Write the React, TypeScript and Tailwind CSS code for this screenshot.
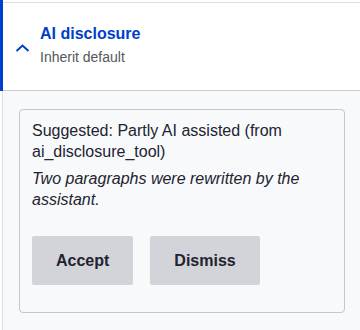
import React from "react";

export default function App() {
  return (
    <div className="relative w-[360px] h-[330px] overflow-hidden bg-white font-['Liberation_Sans',Arial,sans-serif] text-[#222330]">
      {/* blue active marker over the left edge */}
      <div className="absolute left-0 top-0 w-[3px] h-[91px] bg-[#003ecc]" />
      <div className="ml-[2px] mt-[2px] w-[359px] h-[400px] border-l border-t border-[#dedee4] bg-[#f8f9fb]">
        <div className="flex bg-white border-b border-[#cbcbd0] pl-[12px] pt-[22px] pb-[25px]">
          <svg className="mt-[19px] shrink-0" width="15" height="8" viewBox="0 0 15 8" fill="none">
            <path d="M1.5 7 L7.5 1.5 L13.5 7" stroke="#003ecc" strokeWidth="2" />
          </svg>
          <div className="ml-[10px] flex flex-col">
            <span className="text-[16px] font-bold text-[#003ecc] leading-[18.4px]">AI disclosure</span>
            <span className="mt-[6px] text-[14px] text-[#55565b] leading-[16px]">Inherit default</span>
          </div>
        </div>
        <div className="px-4 pt-[18px]">
          <div className="border border-[#c6c6cb] rounded-[4px] px-[12px] pt-[10px] pb-[11px]">
            <p className="text-[16px] leading-[21px]">Suggested: Partly AI assisted (from ai_disclosure_tool)</p>
            <p className="mt-[6px] text-[16px] leading-[21px] italic">Two paragraphs were rewritten by the assistant.</p>
            <div className="mt-[26px] mb-4 flex gap-[17px]">
              <button className="h-[49px] px-6 rounded-[2px] bg-[#d3d4d9] text-[16px] font-bold text-[#222330]">Accept</button>
              <button className="h-[49px] px-6 rounded-[2px] bg-[#d3d4d9] text-[16px] font-bold text-[#222330]">Dismiss</button>
            </div>
          </div>
        </div>
      </div>
    </div>
  );
}
